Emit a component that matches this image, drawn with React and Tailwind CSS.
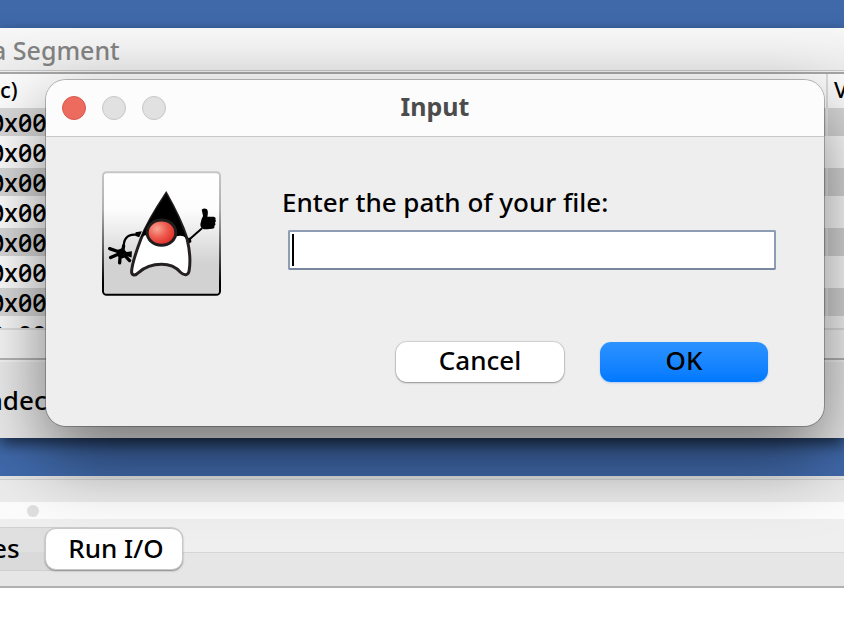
const rows = [0, 1, 2, 3, 4, 5, 6];

function Duke() {
  return (
    <svg viewBox="30 33 358 375" className="h-[125px] w-[119px] shrink-0" role="img" aria-label="Java">
      <defs>
        <linearGradient id="tile" x1="0" y1="0" x2="0" y2="1">
          <stop offset="0" stopColor="#fff" />
          <stop offset="0.3" stopColor="#fdfdfd" />
          <stop offset="0.75" stopColor="#d2d2d2" />
          <stop offset="1" stopColor="#d2d2d2" />
        </linearGradient>
        <linearGradient id="edge" x1="0" y1="0" x2="0" y2="1">
          <stop offset="0" stopColor="#c6c6c6" />
          <stop offset="0.3" stopColor="#b0b0b0" />
          <stop offset="0.7" stopColor="#444" />
          <stop offset="0.9" stopColor="#000" />
        </linearGradient>
        <radialGradient id="nose" cx="0.35" cy="0.35" r="0.7">
          <stop offset="0" stopColor="#f6a694" />
          <stop offset="0.5" stopColor="#ee5a4e" />
          <stop offset="1" stopColor="#dd2a25" />
        </radialGradient>
      </defs>
      <rect x="33" y="36" width="352" height="369" rx="11" fill="url(#tile)" stroke="url(#edge)" strokeWidth="6" />
      <path d="M140 223 C112 222 97 229 95 258" fill="none" stroke="#000" strokeWidth="7" />
      <path d="M131 217 L150 214 L142 232 L131 228 Z" />
      <path d="M82 276 L53 266 M80 282 L56 293 M85 284 L83 309 M96 284 L113 302 M92 276 L95 258" fill="none" stroke="#000" strokeWidth="10" strokeLinecap="round" />
      <path d="M76 270 L92 264 L104 276 L120 274 L119 293 L104 288 L92 296 L78 290 Z" />
      <path d="M290 241 L331 205" stroke="#000" strokeWidth="6" />
      <path d="M283 234 L297 233 L299 246 L286 254 Z" />
      <path d="M330 149 Q336 143 345 147 Q351 154 347 170 L366 170 Q374 172 371 178 Q375 184 370 188 Q374 194 368 198 Q370 206 361 206 L347 208 L336 208 Q325 204 326 192 Q328 177 334 168 Z" />
      <path d="M223 101 C197 140 166 190 147 237 C132 277 119 315 119 337 C121 349 133 346 140 338 C160 320 185 313 209 313 C235 313 253 322 266 337 C277 348 290 347 292 333 C296 310 295 275 286 237 C269 185 248 145 223 101 Z" fill="#fff" stroke="#241f20" strokeWidth="9" strokeLinejoin="miter" />
      <path d="M223 101 C197 140 166 190 147 232 Q153 224 168 226 C182 260 234 260 252 229 Q276 223 284 237 C268 185 248 145 223 101 Z" fill="#000" />
      <ellipse cx="209" cy="218" rx="43" ry="38" fill="url(#nose)" stroke="#211d1e" strokeWidth="9" />
    </svg>
  );
}

function DataSegment() {
  return (
    <section className="flex h-[410px] flex-col overflow-hidden bg-[#eaeaea] shadow-[0_6px_14px_rgba(0,0,0,0.6)]">
      <h2 className="-ml-2 flex h-[42px] shrink-0 items-center bg-linear-to-b from-[#f7f7f7] to-[#ececec] pb-px pt-0.5 text-[25px] leading-8 text-[#828282]">
        a Segment
      </h2>
      <div className="h-1 shrink-0 border-b-2 border-t border-b-[#a6a6a6] border-t-[#c4c4c4] bg-[#eee]" />
      <table className="w-full table-fixed border-collapse text-left">
        <thead>
          <tr className="h-[34px] bg-[#fbfbfb] text-[22px] leading-6">
            <th className="p-0 pb-1 font-medium">c)</th>
            <th className="w-[17px] border-l-2 border-[#dcdcdc] p-0 pb-1 pl-1.5 font-medium">V</th>
          </tr>
        </thead>
        <tbody className="text-[25px] leading-7 slashed-zero">
          {rows.map((r) => (
            <tr key={r} className={r % 2 ? "h-8 bg-[#fcfcfc]" : "h-7 bg-[#d7d7d7]"}>
              <td className="p-0 whitespace-nowrap">
                <span className="-ml-2.5 block">0x00</span>
              </td>
              <td className={r % 2 ? "p-0" : "border-l-2 border-[#e6e6e6] p-0"} />
            </tr>
          ))}
        </tbody>
      </table>
      <div className="h-3 shrink-0 overflow-hidden bg-[#f7f7f7] pt-1 text-[25px] leading-7 slashed-zero">
        <span className="-ml-2.5 block">0x00</span>
      </div>
      <div className="h-8 shrink-0 border-b-2 border-t-2 border-b-[#b4b4b4] border-t-[#dedede] bg-[#f5f5f5]" />
      <div className="flex flex-1 items-center border-t-2 border-[#f3f3f3] bg-[#e9e9e9] text-[26px]">
        <span className="-ml-3">adec</span>
      </div>
    </section>
  );
}

function Console() {
  return (
    <section className="flex flex-1 flex-col bg-white text-[26px]">
      <div className="h-1 border-b border-[#cfcfcf] bg-[#e4e4e4]" />
      <div className="h-[22px] bg-[#ebebeb]" />
      <div className="flex h-[17px] items-center bg-[#fcfcfc] pl-[27px]">
        <span className="size-3 rounded-full bg-[#dfdfdf]" />
      </div>
      <div
        className="flex h-[69px] items-start border-b-2 border-[#b0b0b0] bg-[linear-gradient(#efefef_33px,#d6d6d6_33px,#d6d6d6_34px,#e6e6e6_34px)] pt-2"
        role="tablist"
      >
        <div className="flex h-11 w-[183px] justify-between rounded-r-xl border-y border-[#d0d0d0] bg-linear-to-b from-[#e0e0e0] from-58% to-[#dadada] to-58%">
          <button role="tab" className="-ml-2 w-8 pb-0.5 text-left">es</button>
          <button role="tab" aria-selected="true" className="h-[42px] w-[138px] shrink-0 rounded-[11px] border border-[#c8c8c8] bg-white pb-0.5 pl-1 shadow-[0_1px_2px_rgba(0,0,0,0.35)]">
            Run I/O
          </button>
        </div>
      </div>
    </section>
  );
}

function InputDialog() {
  return (
    <div role="dialog" aria-labelledby="dialog-title" className="absolute left-[46px] right-5 top-20 overflow-hidden rounded-[20px] bg-[#eee] shadow-[0_0_0_1px_rgba(0,0,0,0.25),0_30px_70px_rgba(0,0,0,0.5)]">
      <header className="grid h-[57px] grid-cols-3 items-center border-b border-[#c8c8c8] bg-[#fcfcfc] px-4">
        <div className="flex gap-4">
          <button aria-label="Close" className="size-6 rounded-full border border-[#d8584e] bg-[#ec6a5e]" />
          <button aria-label="Minimize" className="size-6 rounded-full border border-[#c6c6c6] bg-[#e1e1e1]" />
          <button aria-label="Zoom" className="size-6 rounded-full border border-[#c6c6c6] bg-[#e1e1e1]" />
        </div>
        <h1 id="dialog-title" className="pb-1 text-center text-[25px] leading-8 font-bold text-[#4c4c4c]">Input</h1>
      </header>
      <form className="pb-11 pl-14 pr-12 pt-[34px]" onSubmit={(e) => e.preventDefault()}>
        <div className="flex justify-between">
          <Duke />
          <div className="w-[494px] pt-[13px]">
            <label htmlFor="path" className="block text-[26px] leading-9">Enter the path of your file:</label>
            <div className="relative ml-1.5 mt-2.5">
              <input id="path" type="text" className="block h-10 w-full rounded-xs border-2 border-[#8c9db5] border-b-[#77879d] bg-white px-1 caret-transparent outline-none" />
              <span className="absolute inset-y-1 left-1 w-0.5 bg-black" />
            </div>
          </div>
        </div>
        <div className="mt-[46px] flex justify-end gap-9 pr-2 text-[26px] leading-9">
          <button type="button" className="h-10 w-[168px] rounded-[11px] bg-white pb-1 shadow-[0_0_1px_1px_rgba(0,0,0,0.12),0_1px_2px_rgba(0,0,0,0.3)]">Cancel</button>
          <button type="submit" className="h-10 w-[168px] rounded-[11px] bg-linear-to-b from-[#2b92ff] to-[#0079ff] pb-1 shadow-[0_1px_2px_rgba(0,100,255,0.25)]">OK</button>
        </div>
      </form>
    </div>
  );
}

export default function App() {
  return (
    <main className="relative flex min-h-screen flex-col overflow-hidden bg-[#4069aa] font-['Noto_Sans',sans-serif] font-medium text-black">
      <div className="h-7" />
      <DataSegment />
      <div className="h-[38px]" />
      <Console />
      <InputDialog />
    </main>
  );
}
